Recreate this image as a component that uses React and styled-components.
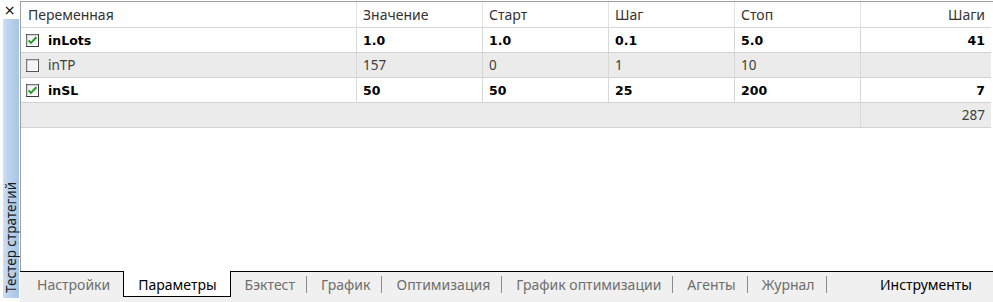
import styled, { createGlobalStyle } from 'styled-components'

const GlobalStyle = createGlobalStyle`
  html, body {
    margin: 0;
    padding: 0;
    background: #ffffff;
  }
  body {
    font-family: "Noto Sans", "Liberation Sans", sans-serif;
  }
`

const Window = styled.div`
  display: flex;
  width: 993px;
  height: 302px;
  overflow: hidden;
  background: #ffffff;
`

const Sidebar = styled.div`
  width: 20px;
  display: flex;
  flex-direction: column;
  background: #ffffff;
`

const CloseButton = styled.div`
  height: 19px;
  display: flex;
  align-items: center;
  justify-content: center;
  padding-right: 1px;
  font-family: "DejaVu Sans", sans-serif;
  font-size: 14px;
  line-height: 1;
  color: #000;
`

const SideTab = styled.div`
  flex: 1;
  margin: 0 1px 4px 3px;
  background: linear-gradient(to right, #a8c5e5, #bdd4ee 70%, #cfe0f3);
  writing-mode: vertical-rl;
  transform: rotate(180deg);
  display: flex;
  align-items: center;
  padding-top: 5px;
  font-size: 13.5px;
  color: #1b1b1b;
  white-space: nowrap;
`

const Main = styled.div`
  flex: 1;
  display: flex;
  flex-direction: column;
  min-width: 0;
`

const TableArea = styled.div`
  flex: 1;
  margin-top: 1px;
  border-top: 1px solid #a0a0a0;
  border-left: 1px solid #a0a0a0;
  background: #ffffff;
`

const Grid = styled.div`
  display: grid;
  grid-template-columns: 336px 126px 126px 126px 126px 1fr;
  width: 970px;
`

const HeadCell = styled.div`
  height: 25px;
  display: flex;
  align-items: center;
  justify-content: ${(p) => (p.$right ? 'flex-end' : 'flex-start')};
  padding: 0 6px 0 ${(p) => (p.$first ? '7px' : '6px')};
  border-right: ${(p) => (p.$last ? 'none' : '1px solid #e3e3e3')};
  border-bottom: 1px solid #d6d6d6;
  font-size: 14px;
  color: #333;
  white-space: nowrap;
`

const Cell = styled.div`
  height: 24px;
  display: flex;
  align-items: center;
  gap: 9px;
  justify-content: ${(p) => (p.$right ? 'flex-end' : 'flex-start')};
  padding: 0 6px 0 ${(p) => (p.$first ? '5px' : '6px')};
  background: ${(p) => (p.$gray ? '#ebebeb' : '#ffffff')};
  border-right: ${(p) => (p.$last ? 'none' : '1px solid #d8d8d8')};
  border-bottom: 1px solid #d2d2d2;
  grid-column: ${(p) => p.$span || 'auto'};
  font-family: ${(p) =>
    p.$bold ? '"DejaVu Sans", sans-serif' : '"Noto Sans", sans-serif'};
  font-weight: ${(p) => (p.$bold ? 700 : 400)};
  font-size: ${(p) => (p.$bold ? '12.5px' : '13.5px')};
  color: ${(p) => (p.$bold ? '#000' : '#404040')};
  white-space: nowrap;
`

const TabBar = styled.div`
  height: 30px;
  display: flex;
  align-items: flex-start;
  border-top: 1px solid #000;
  background: #f0f0f0;
  padding-left: 3px;
`

const Tab = styled.div`
  position: relative;
  height: 24px;
  display: flex;
  align-items: center;
  padding: 0 12px 0 14px;
  font-size: 14px;
  color: ${(p) => (p.$dark ? '#111' : '#6e6e6e')};
  white-space: nowrap;

  &::after {
    content: '';
    display: ${(p) => (p.$sep ? 'block' : 'none')};
    position: absolute;
    right: 0;
    top: 4px;
    height: 17px;
    width: 1px;
    background: #8c8c8c;
  }
`

const FirstTab = styled(Tab)`
  padding: 0 13px 0 14px;
`

const ActiveTab = styled(Tab)`
  margin-top: -1px;
  height: 24px;
  padding: 1px 13px 0 14px;
  background: #ffffff;
  border: 1px solid #000;
  border-top: none;
  color: #000;
`

const ToolsTab = styled(Tab)`
  margin-left: auto;
  padding-right: 21px;
  color: #000;
`

function CheckBox({ checked }) {
  return (
    <svg width="13" height="13" viewBox="0 0 13 13">
      <rect x="0.5" y="0.5" width="12" height="12" fill="#ffffff" stroke={checked ? '#3a3a3a' : '#555'} />
      <path d="M1 1 H12 M1 1 V12" stroke="#a9a9a9" strokeWidth="1" />
      <rect x="2" y="2" width="9" height="9" fill="#f4f4f4" />
      {checked && (
        <path
          d="M2.6 6.4 L4.9 8.9 L10.4 3.2"
          fill="none"
          stroke="#1f9e25"
          strokeWidth="2"
        />
      )}
    </svg>
  )
}

const rows = [
  { name: 'inLots', on: true, vals: ['1.0', '1.0', '0.1', '5.0'], steps: '41' },
  { name: 'inTP', on: false, vals: ['157', '0', '1', '10'], steps: '' },
  { name: 'inSL', on: true, vals: ['50', '50', '25', '200'], steps: '7' },
]

const tabs = ['Бэктест', 'График', 'Оптимизация', 'График оптимизации', 'Агенты', 'Журнал']

export default function App() {
  return (
    <>
      <GlobalStyle />
      <Window>
        <Sidebar>
          <CloseButton>×</CloseButton>
          <SideTab>Тестер стратегий</SideTab>
        </Sidebar>
        <Main>
          <TableArea>
            <Grid>
              <HeadCell $first>Переменная</HeadCell>
              <HeadCell>Значение</HeadCell>
              <HeadCell>Старт</HeadCell>
              <HeadCell>Шаг</HeadCell>
              <HeadCell>Стоп</HeadCell>
              <HeadCell $right $last>Шаги</HeadCell>

              {rows.map((r, i) => {
                const gray = i % 2 === 1
                return [
                  <Cell key={r.name} $first $gray={gray} $bold={r.on}>
                    <CheckBox checked={r.on} />
                    {r.name}
                  </Cell>,
                  ...r.vals.map((v, j) => (
                    <Cell key={r.name + j} $gray={gray} $bold={r.on}>
                      {v}
                    </Cell>
                  )),
                  <Cell key={r.name + 'steps'} $gray={gray} $bold={r.on} $right $last>
                    {r.steps}
                  </Cell>,
                ]
              })}

              <Cell $gray $span="span 5" />
              <Cell $gray $right $last>
                287
              </Cell>
            </Grid>
          </TableArea>
          <TabBar>
            <FirstTab>Настройки</FirstTab>
            <ActiveTab>Параметры</ActiveTab>
            {tabs.map((t) => (
              <Tab key={t} $sep>
                {t}
              </Tab>
            ))}
            <ToolsTab>Инструменты</ToolsTab>
          </TabBar>
        </Main>
      </Window>
    </>
  )
}
